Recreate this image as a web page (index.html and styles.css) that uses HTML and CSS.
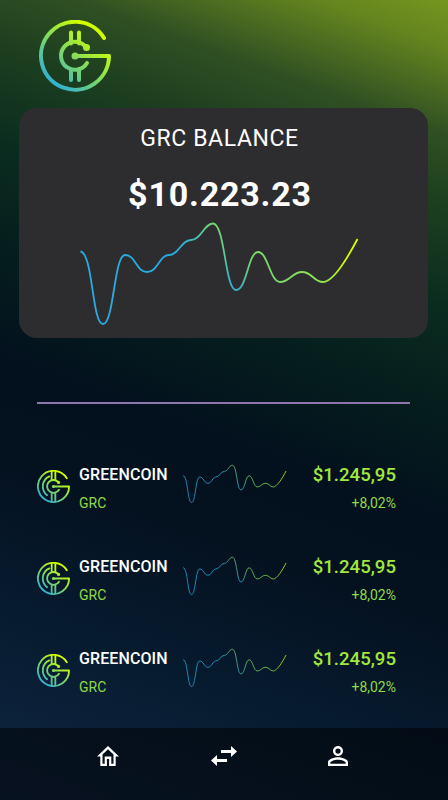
FILE: index.html
```html
<!DOCTYPE html>
<html lang="en">
<head>
  <meta charset="UTF-8">
  <meta name="viewport" content="width=device-width, initial-scale=1.0">
  <title>Greencoin Wallet</title>
  <link rel="stylesheet" href="styles.css">
</head>
<body>
  <!-- shared shapes -->
  <svg class="defs" width="0" height="0" aria-hidden="true">
    <defs>
      <linearGradient id="logoGradient" gradientUnits="userSpaceOnUse" x1="14" y1="62" x2="54" y2="14">
        <stop offset="0" stop-color="#35b2cf"/>
        <stop offset="0.5" stop-color="#80da62"/>
        <stop offset="1" stop-color="#d2ff00"/>
      </linearGradient>
      <linearGradient id="lineGradient" gradientUnits="userSpaceOnUse" x1="80" y1="20" x2="165" y2="-65">
        <stop offset="0" stop-color="#29abe2"/>
        <stop offset="0.15" stop-color="#35b2cf"/>
        <stop offset="0.42" stop-color="#78d670"/>
        <stop offset="0.68" stop-color="#88df58"/>
        <stop offset="1" stop-color="#d8ff00"/>
      </linearGradient>
      <symbol id="chart" viewBox="0 0 280 106">
        <path d="M0.500 30.500C13 32 12 103 23 103S34 34 45 34S56 51 67 51S79 34 89 34S101 19 111 19S124 2.500 133 2.500C145 2.500 145 69 156 69S168 31 178 31S190 61 200 61S212 51 222 51S234 61 243 61C253 61 267 38 277.500 18"/>
      </symbol>
      <symbol id="coin" viewBox="0 0 72 72">
        <path d="M65 18A34 34 0 1 0 70 36H36"/>
        <path d="M46 26A14 14 0 1 0 48 43M32 3v19M40 5v17M32 50v19M40 50v19M27 14A24 24 0 0 0 22 55"/>
        <circle cx="36" cy="36" r="3.500"/>
        <circle cx="47" cy="27" r="3.500"/>
      </symbol>
    </defs>
  </svg>

  <div class="app">
    <header class="header">
      <svg class="logo" viewBox="0 0 72 72">
        <path d="M65 18A34 34 0 1 0 70 36H36"/>
        <path d="M46 26A14 14 0 1 0 48 43M32 12.500v11M40 12.500v11M32 49v11M40 49v11"/>
        <circle cx="36" cy="36" r="3.500"/>
        <circle cx="47.500" cy="27.500" r="3.500"/>
      </svg>
    </header>

    <section class="balance">
      <h1 class="balance-title">GRC BALANCE</h1>
      <p class="balance-value">$10.223.23</p>
      <svg class="balance-chart"><use href="#chart"/></svg>
    </section>

    <hr class="divider">

    <ul class="coins">
      <li class="coin">
        <svg class="coin-logo"><use href="#coin"/></svg>
        <div class="coin-name">
          <strong>GREENCOIN</strong>
          <span>GRC</span>
        </div>
        <svg class="coin-chart"><use href="#chart"/></svg>
        <div class="coin-price">
          <strong>$1.245,95</strong>
          <span>+8,02%</span>
        </div>
      </li>
      <li class="coin">
        <svg class="coin-logo"><use href="#coin"/></svg>
        <div class="coin-name">
          <strong>GREENCOIN</strong>
          <span>GRC</span>
        </div>
        <svg class="coin-chart"><use href="#chart"/></svg>
        <div class="coin-price">
          <strong>$1.245,95</strong>
          <span>+8,02%</span>
        </div>
      </li>
      <li class="coin">
        <svg class="coin-logo"><use href="#coin"/></svg>
        <div class="coin-name">
          <strong>GREENCOIN</strong>
          <span>GRC</span>
        </div>
        <svg class="coin-chart"><use href="#chart"/></svg>
        <div class="coin-price">
          <strong>$1.245,95</strong>
          <span>+8,02%</span>
        </div>
      </li>
    </ul>

    <nav class="navbar">
      <a href="#" aria-label="Home">
        <svg class="nav-icon" viewBox="2 3 20 17" preserveAspectRatio="none"><path d="M12 5.690l5 4.500V18h-2v-6H9v6H7v-7.810l5-4.500M12 3L2 12h3v8h6v-6h2v6h6v-8h3L12 3z"/></svg>
      </a>
      <a href="#" aria-label="Transfer">
        <svg class="nav-icon swap" viewBox="0 0 26 20"><path d="M10 4h10V0l6 5.500L20 11V7H10zM16 13H6V9l-6 5.500L6 20v-4h10z"/></svg>
      </a>
      <a href="#" aria-label="Profile">
        <svg class="nav-icon person" viewBox="4 4 16 16"><path d="M12 5.900a2.100 2.100 0 1 1 0 4.200 2.100 2.100 0 0 1 0-4.200m0 9c2.970 0 6.100 1.460 6.100 2.100v1.100H5.900V17c0-.64 3.130-2.100 6.100-2.100M12 4C9.790 4 8 5.790 8 8s1.790 4 4 4 4-1.790 4-4-1.790-4-4-4zm0 9c-2.670 0-8 1.340-8 4v3h16v-3c0-2.660-5.330-4-8-4z"/></svg>
      </a>
    </nav>
  </div>
</body>
</html>
```
FILE: styles.css
```css
* {
  box-sizing: border-box;
  margin: 0;
  padding: 0;
}
body {
  font-family: Roboto, sans-serif;
  color: #fff;
}
.defs {
  display: block;
}
.app {
  display: flex;
  flex-direction: column;
  height: 800px;
  background: linear-gradient(200deg, #75961e 0%, #64841f 5%, #305023 14%, #1e401f 21%, #0a2c1f 32%, #051d1d 43%, #03111e 54%, #04111f 64%, #071b2f 80%, #0d223c 93%, #0f2440 100%);
}
.header {
  flex: none;
  height: 108px;
  padding: 20px 0 0 39px;
}
.logo {
  display: block;
  width: 72px;
  height: 72px;
}
.logo, .coin-logo {
  fill: none;
  stroke: url(#logoGradient);
  stroke-width: 4;
  stroke-linecap: round;
  stroke-linejoin: round;
}
circle {
  fill: url(#logoGradient);
  stroke: none;
}
.balance {
  display: flex;
  flex: none;
  flex-direction: column;
  align-items: center;
  width: 409px;
  height: 230px;
  margin-left: 19px;
  padding: 17px 8px 0 0;
  border-radius: 18px;
  background: #2d2d2f;
}
.balance-title {
  font-size: 23px;
  font-weight: 400;
  line-height: 28px;
  letter-spacing: 0.6px;
}
.balance-value {
  margin-top: 20px;
  padding-left: 1px;
  font-size: 34px;
  font-weight: 700;
  line-height: 42px;
  letter-spacing: 0.8px;
}
.balance-chart {
  width: 280px;
  height: 106px;
  margin-top: 6px;
}
.balance-chart, .coin-chart {
  fill: none;
  stroke: url(#lineGradient);
  stroke-width: 1.8;
}
.divider {
  margin: 64px 38px 0 37px;
  border: 0;
  border-top: 2px solid #8c76ac;
}
.coins {
  list-style: none;
  margin: 59px 52px 0 37px;
}
.coin {
  display: flex;
  height: 92px;
}
.coin:last-child {
  height: auto;
}
.coin-logo {
  width: 33px;
  height: 33px;
  margin-top: 7px;
}
.coin-name {
  display: flex;
  flex-direction: column;
  width: 96px;
  margin-left: 9px;
}
.coin-name strong {
  font-size: 16px;
  font-weight: 500;
  line-height: 24px;
  letter-spacing: 0.1px;
}
.coin-name span, .coin-price span {
  margin-top: 7px;
  color: #8fda45;
  font-size: 14px;
  line-height: 18px;
}
.coin-chart {
  width: 104px;
  height: 40px;
  margin: 1px 0 0 8px;
  stroke-width: 2.4;
  opacity: 0.85;
}
.coin-price {
  display: flex;
  flex: 1;
  flex-direction: column;
  align-items: flex-end;
}
.coin-price strong {
  color: #a1e83e;
  font-size: 18.600px;
  font-weight: 500;
  line-height: 24px;
}
.navbar {
  display: flex;
  flex: none;
  justify-content: space-between;
  height: 72px;
  margin-top: auto;
  padding: 18px 100px 0 97px;
  background: rgba(0, 0, 0, 0.5);
}
.nav-icon {
  display: block;
  width: 22px;
  height: 20px;
  fill: #fff;
}
.swap {
  width: 26px;
}
.person {
  width: 20px;
}
```
